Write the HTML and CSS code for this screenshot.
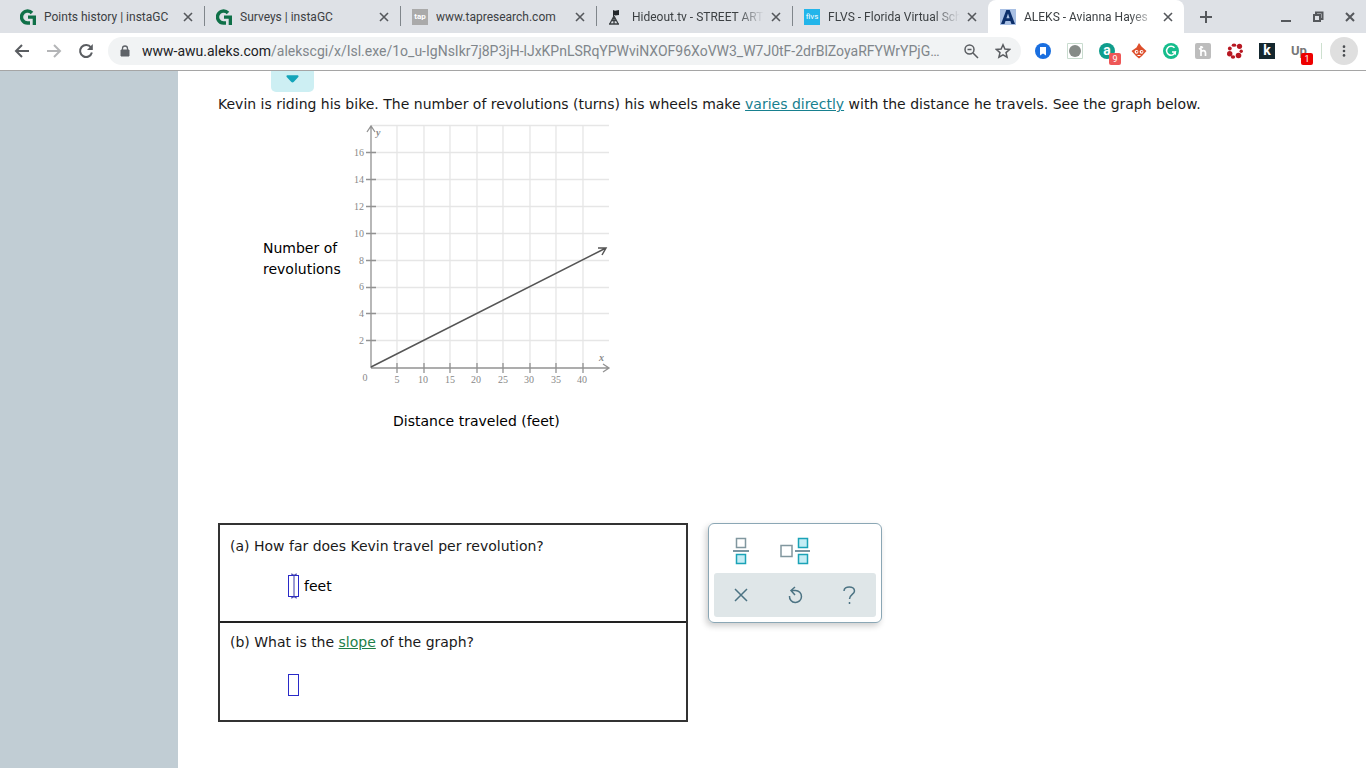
FILE: index.html
```html
<!DOCTYPE html>
<html lang="en">
<head>
  <meta charset="UTF-8">
  <title>ALEKS - Avianna Hayes</title>
  <link rel="stylesheet" href="styles.css">
</head>
<body>

<header class="browser">
  <div class="tab-strip">
    <div class="tab">
      <svg class="favicon" viewBox="0 0 16 16"><path d="M12 4A6 6 0 1 0 7.500 14H10" fill="none" stroke="#0f7048" stroke-width="3.400"/><path d="M8 6.500h8V16h-3.300V9.700H8z" fill="#0f7048"/></svg>
      <span class="tab-title">Points history | instaGC</span>
      <button class="tab-close" aria-label="Close tab"><svg viewBox="0 0 10 10"><path d="M1 1l8 8M9 1l-8 8"/></svg></button>
    </div>
    <div class="tab">
      <svg class="favicon" viewBox="0 0 16 16"><path d="M12 4A6 6 0 1 0 7.500 14H10" fill="none" stroke="#0f7048" stroke-width="3.400"/><path d="M8 6.500h8V16h-3.300V9.700H8z" fill="#0f7048"/></svg>
      <span class="tab-title">Surveys | instaGC</span>
      <button class="tab-close" aria-label="Close tab"><svg viewBox="0 0 10 10"><path d="M1 1l8 8M9 1l-8 8"/></svg></button>
    </div>
    <div class="tab">
      <span class="favicon tap">tap</span>
      <span class="tab-title">www.tapresearch.com</span>
      <button class="tab-close" aria-label="Close tab"><svg viewBox="0 0 10 10"><path d="M1 1l8 8M9 1l-8 8"/></svg></button>
    </div>
    <div class="tab">
      <svg class="favicon" viewBox="0 0 16 16"><path d="M5 1l2 .8 4-.8v5L7 6.500l-1-.5v3H5z" fill="#23272b"/><path d="M6 7L2 14.500M6 7l4 7.500M1 15h10M3.500 11.500h5M6 8v7" fill="none" stroke="#3c4043" stroke-width="1.300"/></svg>
      <span class="tab-title fade">Hideout.tv - STREET ART</span>
      <button class="tab-close" aria-label="Close tab"><svg viewBox="0 0 10 10"><path d="M1 1l8 8M9 1l-8 8"/></svg></button>
    </div>
    <div class="tab last">
      <span class="favicon flvs">flvs</span>
      <span class="tab-title fade">FLVS - Florida Virtual Sch</span>
      <button class="tab-close" aria-label="Close tab"><svg viewBox="0 0 10 10"><path d="M1 1l8 8M9 1l-8 8"/></svg></button>
    </div>
    <div class="tab active">
      <svg class="favicon" viewBox="0 0 16 16"><path d="M0 0h16v16H0z" fill="#a9c0e4"/><path d="M6.300 1h3.400L15 15h-3.600l-1-3H5.500l-1 3H1zM8 4.500L6.400 9.300h3.200z" fill="#0c2f6b"/></svg>
      <span class="tab-title fade">ALEKS - Avianna Hayes</span>
      <button class="tab-close" aria-label="Close tab"><svg viewBox="0 0 10 10"><path d="M1 1l8 8M9 1l-8 8"/></svg></button>
    </div>
    <button class="new-tab" aria-label="New tab"><svg viewBox="0 0 12 12"><path d="M6 0v12M0 6h12"/></svg></button>
    <div class="window-controls">
      <button aria-label="Minimize"><svg viewBox="0 0 12 12"><path d="M1 10h10"/></svg></button>
      <button aria-label="Restore"><svg viewBox="0 0 12 12"><path d="M2 4h6v6H2zM4 4V1.500h6.500V8H8"/></svg></button>
      <button aria-label="Close"><svg viewBox="0 0 12 12"><path d="M2 2l8 8M10 2l-8 8"/></svg></button>
    </div>
  </div>

  <div class="toolbar">
    <button class="nav" aria-label="Back"><svg viewBox="0 0 16 16"><path d="M15 8H2M8 2L2 8l6 6"/></svg></button>
    <button class="nav" aria-label="Forward" disabled><svg viewBox="0 0 16 16"><path d="M1 8h13M8 2l6 6-6 6"/></svg></button>
    <button class="nav" aria-label="Reload"><svg viewBox="0 0 16 16"><path d="M13 4.500A6 6 0 1 0 13.900 9.500"/><path d="M14.800 1v6H9z" class="solid"/></svg></button>
    <div class="address">
      <svg class="lock" viewBox="0 0 10 12"><path d="M1 5h8v6H1z" fill="#5f6368" stroke="#5f6368" stroke-width="1"/><path d="M2.500 5V3.500a2.500 2.500 0 0 1 5 0V5" fill="none" stroke="#5f6368" stroke-width="1.300"/></svg>
      <span class="url"><b>www-awu.aleks.com</b>/alekscgi/x/Isl.exe/1o_u-IgNsIkr7j8P3jH-lJxKPnLSRqYPWviNXOF96XoVW3_W7J0tF-2drBlZoyaRFYWrYPjG…</span>
      <button class="nav" aria-label="Zoom"><svg viewBox="0 0 16 16"><circle cx="6.500" cy="6.500" r="4.500"/><path d="M10 10l5 5M4.500 6.500h4"/></svg></button>
      <button class="nav" aria-label="Bookmark"><svg viewBox="0 0 16 16"><path class="star" d="M8 1.800l1.900 4.300 4.700.4-3.600 3.100 1.100 4.600L8 11.800l-4.100 2.400L5 9.600 1.400 6.500l4.700-.4z"/></svg></button>
    </div>
    <div class="extensions">
      <svg viewBox="0 0 16 16"><circle cx="8" cy="8" r="8" fill="#1a6fe0"/><path d="M5 4h6v8.500L8 10.500l-3 2z" fill="#fff"/></svg>
      <svg viewBox="0 0 16 16"><path d="M.5.5h15v15H.5z" fill="#fff" stroke="#c9dccf"/><circle cx="8" cy="8" r="6" fill="#858b87"/></svg>
      <span class="ext amazon">a<i class="badge">9</i></span>
      <svg viewBox="0 0 16 16"><path d="M8 0l2.500 3.500L15.500 8 11 13l-3 2.500L5 13 .5 8l5-3.500z" fill="#dd4f2c"/><circle cx="5.500" cy="8.800" r="1.900" fill="#fff"/><circle cx="10.500" cy="8.800" r="1.900" fill="#fff"/><path d="M5 8h1.500v1.500H5zM10 8h1.500v1.500H10z" fill="#dd4f2c"/><path d="M6.500 12.500h3" stroke="#fff"/></svg>
      <svg viewBox="0 0 16 16"><circle cx="8" cy="8" r="8" fill="#15bd8c"/><path d="M11.500 4.800A4.500 4.500 0 1 0 12.400 9H9" fill="none" stroke="#fff" stroke-width="1.500"/><path d="M13 8v4l-3-2z" fill="#fff"/></svg>
      <svg viewBox="0 0 16 16"><rect width="16" height="16" rx="2" fill="#bdbdbd"/><path d="M6 3v10M6 9c1-2 4.500-2 4.500 1v3M4 6l4-2" fill="none" stroke="#fff" stroke-width="1.700"/></svg>
      <svg viewBox="0 0 16 16" fill="#b81822"><ellipse cx="7" cy="2.200" rx="2.300" ry="1.600"/><circle cx="12.500" cy="3.300" r="2.600"/><circle cx="14.200" cy="8.200" r="1.700"/><circle cx="11.500" cy="12.500" r="2.800"/><ellipse cx="6" cy="14" rx="2.200" ry="1.700"/><circle cx="2.700" cy="10.800" r="2.700"/><circle cx="2.800" cy="5.500" r="1.900"/></svg>
      <span class="ext keepa">k</span>
      <span class="ext up">Up<i class="badge red">1</i></span>
    </div>
    <button class="menu" aria-label="Menu"><svg viewBox="0 0 16 16"><circle cx="8" cy="3" r="1.500"/><circle cx="8" cy="8" r="1.500"/><circle cx="8" cy="13" r="1.500"/></svg></button>
  </div>
</header>

<div class="page">
  <aside class="side"></aside>
  <main class="content">
    <button class="expander" aria-label="Show more"><svg viewBox="0 0 14 8"><path d="M2 0h10c1.500 0 2 1 1 2L8.500 7q-1.500 1.500-3 0L1 2C0 1 .5 0 2 0z"/></svg></button>
    <p class="problem">Kevin is riding his bike. The number of revolutions (turns) his wheels make <a href="#">varies directly</a> with the distance he travels. See the graph below.</p>

    <div class="chart">
      <div class="y-label">Number of<br>revolutions</div>
      <svg class="graph" viewBox="350 120 264 270" role="img" aria-label="Line graph through the origin">
        <g class="grid">
          <path d="M371 125.500h238M371 152.500h238M371 179.500h238M371 206.500h238M371 233.500h238M371 260.500h238M371 287.500h238M371 313.500h238M371 340.500h238"/>
          <path d="M397 125v243M424 125v243M450 125v243M477 125v243M503 125v243M530 125v243M556 125v243M583 125v243"/>
        </g>
        <g class="axes">
          <path d="M371 368V126M367 132l4-6 4 6M371 368h238M603 364l6 4-6 4"/>
          <path d="M366 152.500h10M366 179.500h10M366 206.500h10M366 233.500h10M366 260.500h10M366 287.500h10M366 313.500h10M366 340.500h10"/>
          <path d="M397 363v10M424 363v10M450 363v10M477 363v10M503 363v10M530 363v10M556 363v10M583 363v10"/>
        </g>
        <path class="line" d="M371 367L606 248M598 248l8 0-4 7"/>
        <g class="ticks-y">
          <text x="364" y="156">16</text><text x="364" y="183">14</text><text x="364" y="210">12</text><text x="364" y="237">10</text>
          <text x="364" y="264">8</text><text x="364" y="290">6</text><text x="364" y="317">4</text><text x="364" y="344">2</text>
        </g>
        <g class="ticks-x">
          <text x="365" y="381">0</text><text x="397" y="383">5</text><text x="423" y="383">10</text><text x="450" y="383">15</text><text x="476" y="383">20</text>
          <text x="503" y="383">25</text><text x="529" y="383">30</text><text x="556" y="383">35</text><text x="582" y="383">40</text>
        </g>
        <text class="axis-name" x="376" y="136">y</text>
        <text class="axis-name" x="599" y="361">x</text>
      </svg>
    </div>
    <div class="x-label">Distance traveled (feet)</div>

    <div class="work">
      <div class="questions">
        <section class="question">
          <label for="answerA">(a) How far does Kevin travel per revolution?</label>
          <div class="answer">
            <span class="field">
              <input id="answerA" type="text">
              <svg class="caret" viewBox="0 0 8 26"><path d="M1 1q3 0 3 2 0-2 3-2M4 3v20M1 25q3 0 3-2 0 2 3 2"/></svg>
            </span>
            feet
          </div>
        </section>
        <section class="question">
          <label for="answerB">(b) What is the <a href="#">slope</a> of the graph?</label>
          <div class="answer"><span class="field"><input id="answerB" type="text"></span></div>
        </section>
      </div>

      <div class="keypad">
        <div class="key-row">
          <button aria-label="Fraction"><svg width="32" height="28" viewBox="0 0 32 28"><path class="box" d="M11.500 1.500h9v9h-9z"/><path class="box fill" d="M11.500 17.500h9v9h-9z"/><path class="bar" d="M8 14h16"/></svg></button>
          <button aria-label="Mixed number"><svg width="32" height="28" viewBox="0 0 32 28"><path class="box" d="M2 8.500h11v11H2z"/><path class="box fill" d="M19.500 1.500h9v9h-9zM19.500 17.500h9v9h-9z"/><path class="bar" d="M16 14h15"/></svg></button>
        </div>
        <div class="key-row tools">
          <button aria-label="Clear"><svg width="20" height="20" viewBox="0 0 20 20"><path d="M4 4l12 12M16 4L4 16"/></svg></button>
          <button aria-label="Undo"><svg width="20" height="20" viewBox="0 0 20 20"><path d="M4.500 11a6 6 0 1 0 6-5.500H6M10 2L6 5.500l4 4.500"/></svg></button>
          <button aria-label="Help"><svg width="20" height="20" viewBox="0 0 20 20"><path d="M5 6c0-5.500 10.500-5.500 10.500 0 0 3.500-5 3.500-5 8M10.500 17v2"/></svg></button>
        </div>
      </div>
    </div>
  </main>
</div>

</body>
</html>
```
FILE: styles.css
```css
* {
  box-sizing: border-box;
}

body {
  margin: 0;
  min-height: 100vh;
  display: flex;
  flex-direction: column;
  font-family: "DejaVu Sans", Verdana, sans-serif;
  font-size: 14px;
  color: #1a1a1a;
  background-color: #fff;
}

button {
  display: flex;
  align-items: center;
  justify-content: center;
  padding: 0;
  border: none;
  background: none;
}

svg {
  flex-shrink: 0;
}

.browser {
  font-family: Roboto, sans-serif;
  border-bottom: 1px solid #a5a5a5;
}

/* Tabs */
.tab-strip {
  display: flex;
  height: 33px;
  background-color: #dee1e6;
}

.tab {
  position: relative;
  display: flex;
  align-items: center;
  flex: 0 1 196px;
  min-width: 0;
  height: 33px;
  padding-left: 20px;
}

.tab:not(.last):not(.active)::after {
  content: "";
  position: absolute;
  right: -9px;
  top: 6px;
  width: 1px;
  height: 20px;
  background-color: #80868b;
}

.tab.active {
  margin-left: 8px;
  padding: 0 8px 0 12px;
  background-color: #fff;
  border-radius: 8px 8px 0 0;
}

.favicon {
  flex: 0 0 16px;
  width: 16px;
  height: 16px;
  margin-right: 8px;
  font-size: 8px;
  line-height: 16px;
  text-align: center;
  color: #fff;
}

.tap {
  background-color: #aaa;
  font-weight: bold;
}

.flvs {
  background-color: #22b5ea;
}

.tab-title {
  flex: 1;
  overflow: hidden;
  white-space: nowrap;
  font-size: 12px;
  color: #3c4043;
}

.fade {
  -webkit-mask-image: linear-gradient(to right, #000 80%, transparent);
  mask-image: linear-gradient(to right, #000 80%, transparent);
}

.tab-close {
  width: 16px;
  height: 16px;
  margin-left: 4px;
}

.tab-close svg,
.new-tab svg,
.window-controls svg {
  fill: none;
  stroke: #55585c;
  stroke-width: 2;
}

.tab-close svg {
  width: 10px;
  height: 10px;
  stroke-width: 1.6;
}

.new-tab {
  width: 44px;
}

.new-tab svg,
.window-controls svg {
  width: 12px;
  height: 12px;
}

.window-controls {
  display: flex;
  margin-left: auto;
}

.window-controls button {
  width: 32px;
}

/* Toolbar */
.toolbar {
  display: flex;
  align-items: center;
  height: 37px;
  padding: 0 8px 1px 6px;
}

.nav {
  width: 32px;
  height: 28px;
}

.nav svg {
  width: 16px;
  height: 16px;
  fill: none;
  stroke: #5a5d61;
  stroke-width: 2;
}

.nav .solid {
  fill: #5a5d61;
  stroke: none;
}

.nav .star {
  stroke-width: 1.5;
}

.nav:disabled {
  opacity: 0.45;
}

.address {
  display: flex;
  align-items: center;
  flex: 1;
  min-width: 0;
  height: 28px;
  margin-left: 6px;
  padding-right: 2px;
  border-radius: 14px;
  background-color: #f1f3f4;
}

.address .nav svg {
  width: 16px;
  height: 16px;
  stroke-width: 1.5;
}

.lock {
  width: 10px;
  height: 12px;
  margin: 0 12px;
}

.url {
  flex: 1;
  overflow: hidden;
  white-space: nowrap;
  font-size: 14px;
  color: #80868b;
}

.url b {
  font-weight: normal;
  color: #202124;
}

.extensions {
  display: flex;
  gap: 16px;
  margin-left: 14px;
  padding-right: 14px;
  border-right: 1px solid #cde0cf;
}

.extensions svg,
.ext {
  width: 16px;
  height: 16px;
}

.ext {
  position: relative;
  font-size: 14px;
  font-weight: bold;
  line-height: 15px;
  text-align: center;
  color: #fff;
}

.amazon {
  border-radius: 8px;
  background-color: #0f9d8c;
}

.keepa {
  background-color: #14272e;
}

.up {
  font-size: 13px;
  color: #777;
}

.badge {
  position: absolute;
  left: 10px;
  top: 10px;
  width: 12px;
  height: 12px;
  border-radius: 2px;
  background-color: #ee5757;
  font-size: 9px;
  font-style: normal;
  font-weight: normal;
  line-height: 12px;
  color: #fff;
}

.badge.red {
  background-color: #ee0000;
}

.menu {
  width: 28px;
  height: 28px;
  margin-left: 8px;
  border-radius: 14px;
  background-color: #dfdfdf;
}

.menu svg {
  width: 14px;
  height: 14px;
  fill: #4a4d51;
}

/* Page */
.page {
  flex: 1;
  display: flex;
}

.side {
  flex: 0 0 178px;
  background-color: #c1cdd4;
}

.content {
  flex: 1;
  min-width: 0;
  padding: 0 40px 40px;
}

.expander {
  width: 43px;
  height: 21px;
  margin-left: 53px;
  padding-bottom: 6px;
  border-radius: 0 0 5px 5px;
  background-color: #cdeff3;
}

.expander svg {
  width: 13px;
  height: 8px;
  fill: #12a5ba;
}

.problem {
  margin: 2px 0 0;
  line-height: 20px;
}

.problem a {
  color: #17808f;
}

.chart {
  display: flex;
  align-items: center;
  gap: 9px;
  margin: 6px 0 0 45px;
}

.y-label {
  width: 78px;
  padding-top: 8px;
  line-height: 21px;
  white-space: nowrap;
  color: #000;
}

.graph {
  width: 264px;
  height: 270px;
}

.grid path {
  fill: none;
  stroke: #e6e6e6;
  stroke-width: 1.3;
}

.axes path {
  fill: none;
  stroke: #929292;
  stroke-width: 1.3;
}

.line {
  fill: none;
  stroke: #555;
  stroke-width: 1.5;
}

.graph text {
  font-family: "Liberation Serif", serif;
  font-size: 10px;
  fill: #888;
}

.ticks-y text {
  text-anchor: end;
}

.ticks-x text {
  text-anchor: middle;
}

.graph .axis-name {
  font-style: italic;
  font-weight: bold;
}

.x-label {
  margin: 21px 0 0 175px;
  line-height: 20px;
  color: #000;
}

.work {
  display: flex;
  align-items: flex-start;
  gap: 20px;
  margin-top: 92px;
}

.questions {
  width: 470px;
  border: 2px solid #333;
}

.question {
  height: 96px;
  padding: 11px 10px 0;
}

.question + .question {
  height: 99px;
  padding-top: 9px;
  border-top: 2px solid #222;
}

.question label {
  display: block;
  line-height: 20px;
}

.question a {
  color: #1d7f48;
}

.answer {
  display: flex;
  align-items: center;
  gap: 5px;
  margin: 19px 0 0 58px;
  line-height: 22px;
  color: #000;
}

.question + .question .answer {
  margin-top: 22px;
}

.field {
  position: relative;
  display: flex;
}

.field input {
  width: 11px;
  height: 22px;
  padding: 0;
  border: 1px solid #2a2ac8;
  background: none;
}

.caret {
  position: absolute;
  left: 2px;
  top: -2px;
  width: 8px;
  height: 26px;
  fill: none;
  stroke: #3838a8;
}

.keypad {
  width: 174px;
  padding: 5px;
  border: 1px solid #8ba7b5;
  border-radius: 6px;
  box-shadow: -2px 3px 6px rgba(0, 0, 0, 0.2);
}

.key-row {
  display: grid;
  grid-template-columns: repeat(3, 1fr);
  height: 44px;
}

.key-row.tools {
  border-radius: 3px;
  background-color: #dfe6e8;
}

.key-row svg {
  fill: none;
  stroke: #4c7383;
  stroke-width: 1.5;
}

.key-row .box {
  stroke: #81979f;
}

.key-row .box.fill {
  fill: #c4edf5;
  stroke: #1ba3b7;
}
```
